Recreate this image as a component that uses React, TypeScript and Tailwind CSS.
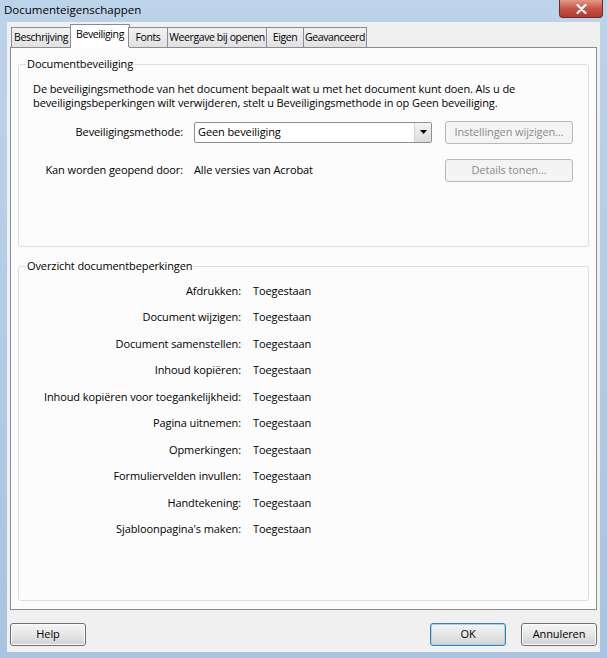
import React from 'react';

const font = "font-['Open_Sans',sans-serif] text-[11px] tracking-[-0.1px]";

// tab label + width in px, as measured from the dialog
const tabs: [string, number][] = [
  ['Beschrijving', 60],
  ['Beveiliging', 58],
  ['Fonts', 40],
  ['Weergave bij openen', 100],
  ['Eigen', 38],
  ['Geavanceerd', 64],
];

const restrictions = [
  'Afdrukken:',
  'Document wijzigen:',
  'Document samenstellen:',
  'Inhoud kopiëren:',
  'Inhoud kopiëren voor toegankelijkheid:',
  'Pagina uitnemen:',
  'Opmerkingen:',
  'Formuliervelden invullen:',
  'Handtekening:',
  "Sjabloonpagina's maken:",
];

const DisabledButton = ({ label }: { label: string }) => (
  <div className="flex h-[23px] w-[128px] items-center justify-center rounded-[3px] border border-[#b5b9bc] bg-[#f4f4f4] text-[#8a8a8a]">
    {label}
  </div>
);

const DialogButton = ({ label, primary }: { label: string; primary?: boolean }) => (
  <button
    className={
      'flex h-[23px] w-[76px] items-center justify-center rounded-[3px] border bg-gradient-to-b from-[#f6f6f6] via-[#e6e6e6] to-[#d2d2d2] text-black ' +
      (primary ? 'border-[#3c7fb1] shadow-[inset_0_0_0_1px_#a6d2f0]' : 'border-[#707070] shadow-[inset_0_0_0_1px_#fbfbfb]')
    }
  >
    {label}
  </button>
);

export default function App() {
  return (
    <div className={`${font} flex h-[658px] w-[607px] flex-col bg-gradient-to-b from-[#bcd3ea] to-[#a9c4e0] text-black`}>
      {/* title bar */}
      <div className="relative flex h-[22px] shrink-0 items-center pl-[4px] text-[11.5px] tracking-normal text-black">
        <span className="-mt-[2px]">Documenteigenschappen</span>
        <div className="absolute right-[4px] top-0 flex h-[18px] w-[44px] items-center justify-center rounded-b-[4px] border border-t-0 border-[#6e2a24] bg-gradient-to-b from-[#e19a8b] via-[#c75547] to-[#b23a2b]">
          <svg width="11" height="10" viewBox="0 0 11 10">
            <path d="M1.5 1 L9.5 9 M9.5 1 L1.5 9" stroke="#fff" strokeWidth="2.2" strokeLinecap="round" />
          </svg>
        </div>
      </div>

      {/* client area */}
      <div className="mx-[7px] mb-[6px] flex flex-1 flex-col bg-[#f0f0f0] px-[3px] pt-[3px]">
        {/* tabs */}
        <div className="relative z-10 flex h-[22px] items-end whitespace-nowrap pl-[1px] text-[10.5px] tracking-[-0.4px]">
          {tabs.map(([t, w]) =>
            t === 'Beveiliging' ? (
              <div
                key={t}
                style={{ width: w + 2 }}
                className="-mx-[1px] -mb-[1px] flex h-[24px] shrink-0 items-start justify-center border border-b-0 border-[#898c95] bg-white pt-[2px]"
              >
                {t}
              </div>
            ) : (
              <div
                key={t}
                style={{ width: w }}
                className="-ml-[1px] flex h-[20px] shrink-0 items-center justify-center border border-b-0 border-[#898c95] bg-gradient-to-b from-[#f2f2f2] to-[#e1e1e1] first:ml-0"
              >
                {t}
              </div>
            ),
          )}
        </div>

        {/* tab panel */}
        <div className="flex h-[563px] flex-col gap-[11px] border border-[#898c95] bg-[#fcfcfc] px-[7px] pb-[8px] pt-[8px]">
          <fieldset className="h-[191px] shrink-0 rounded-[3px] border border-[#d5dfe5] pl-[14px]">
            <legend className="-ml-[7px] px-[1px]">Documentbeveiliging</legend>
            <p className="mt-[9px] leading-[14px]">
              De beveiligingsmethode van het document bepaalt wat u met het document kunt doen. Als u de
              <br />
              beveiligingsbeperkingen wilt verwijderen, stelt u Beveiligingsmethode in op Geen beveiliging.
            </p>
            <div className="-ml-[14px] mt-[11px] grid grid-cols-[164px_238px_128px] items-center gap-x-[11px] gap-y-[15px]">
              <span className="text-right">Beveiligingsmethode:</span>
              <div className="flex h-[21px] items-center rounded-[2px] border border-[#8e8f8f] bg-white pl-[3px]">
                <span className="flex-1">Geen beveiliging</span>
                <div className="flex h-full w-[17px] items-center justify-center border-l border-[#d0d0d0] bg-gradient-to-b from-[#f4f4f4] to-[#dcdcdc]">
                  <svg width="7" height="4" viewBox="0 0 7 4">
                    <path d="M0 0 H7 L3.5 4 Z" fill="#000" />
                  </svg>
                </div>
              </div>
              <div className="ml-[2px]">
                <DisabledButton label="Instellingen wijzigen..." />
              </div>
              <span className="text-right">Kan worden geopend door:</span>
              <span>Alle versies van Acrobat</span>
              <div className="ml-[2px]">
                <DisabledButton label="Details tonen..." />
              </div>
            </div>
          </fieldset>

          <fieldset className="flex-1 rounded-[3px] border border-[#d5dfe5]">
            <legend className="ml-[7px] px-[1px]">Overzicht documentbeperkingen</legend>
            <div className="mt-[8px] grid grid-cols-[222px_1fr] gap-x-[12px] gap-y-[10.5px] leading-[16px]">
              {restrictions.map((r) => (
                <React.Fragment key={r}>
                  <span className="text-right">{r}</span>
                  <span>Toegestaan</span>
                </React.Fragment>
              ))}
            </div>
          </fieldset>
        </div>

        {/* footer buttons */}
        <div className="flex items-center pt-[13px]">
          <DialogButton label="Help" />
          <div className="flex-1" />
          <DialogButton label="OK" primary />
          <div className="w-[15px]" />
          <DialogButton label="Annuleren" />
        </div>
      </div>
    </div>
  );
}
